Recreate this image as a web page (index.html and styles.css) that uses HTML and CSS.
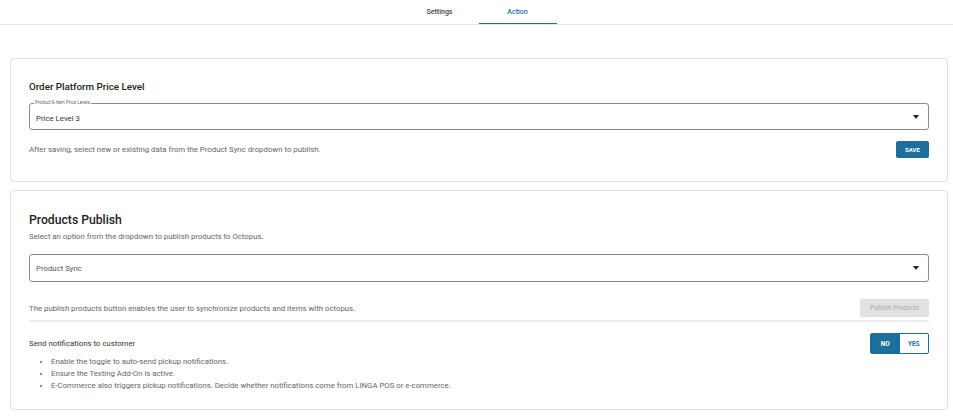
FILE: index.html
```html
<!DOCTYPE html>
<html lang="en">
<head>
    <meta charset="UTF-8">
    <title>Octopus Integration - Action</title>
    <link rel="stylesheet" href="styles.css">
</head>
<body>
    <div class="tabs">
        <div class="tab">Settings</div>
        <div class="tab active">Action</div>
    </div>

    <div class="content">
        <div class="card card-price">
            <h2 class="card-title">Order Platform Price Level</h2>
            <fieldset class="field">
                <legend>Product &amp; Item Price Levels</legend>
                <span class="field-value">Price Level 3</span>
                <span class="caret"></span>
            </fieldset>
            <div class="row">
                <p class="muted">After saving, select new or existing data from the Product Sync dropdown to publish.</p>
                <button class="btn-save">SAVE</button>
            </div>
        </div>

        <div class="card card-publish">
            <h2 class="card-title big">Products Publish</h2>
            <p class="muted sub">Select an option from the dropdown to publish products to Octopus.</p>
            <div class="field select">
                <span class="field-value light">Product Sync</span>
                <span class="caret"></span>
            </div>
            <div class="row publish-row">
                <p class="muted">The publish products button enables the user to synchronize products and items with octopus.</p>
                <button class="btn-disabled" disabled>Publish Products</button>
            </div>
            <div class="row notify-row">
                <p class="notify-label">Send notifications to customer</p>
                <div class="toggle">
                    <span class="opt on">NO</span>
                    <span class="opt">YES</span>
                </div>
            </div>
            <ul class="notes">
                <li>Enable the toggle to auto-send pickup notifications.</li>
                <li>Ensure the Texting Add-On is active.</li>
                <li>E-Commerce also triggers pickup notifications. Decide whether notifications come from LINGA POS or e-commerce.</li>
            </ul>
        </div>
    </div>
</body>
</html>
```

FILE: styles.css
```css
* { margin: 0; padding: 0; box-sizing: border-box; }
body {
    font-family: Roboto, "Liberation Sans", sans-serif;
    background: #fff;
    color: #333;
}
.tabs {
    display: flex;
    justify-content: center;
    height: 25px;
    border-bottom: 1px solid #e3e3e3;
    padding-left: 4px;
}
.tab {
    width: 78px;
    text-align: center;
    font-size: 7px;
    font-weight: 500;
    color: #444;
    line-height: 24px;
}
.tab.active {
    color: #1b6f9a;
    border-bottom: 1.5px solid #1b6f9a;
}
.content {
    padding: 33px 5px 0 10px;
}
.card {
    border: 1px solid #e0e0e0;
    border-radius: 4px;
    padding: 0 18px;
}
.card-price {
    height: 124px;
    padding-top: 21px;
}
.card-publish {
    margin-top: 8px;
    height: 220px;
    padding-top: 21px;
}
.card-title {
    font-size: 9.8px;
    font-weight: 500;
    color: #222;
    line-height: 14px;
}
.card-title.big {
    font-size: 12.2px;
    line-height: 17px;
}
.field {
    position: relative;
    border: 1px solid #8a8a8a;
    border-radius: 3px;
    height: 28px;
    display: flex;
    align-items: center;
    padding: 0 6px;
}
fieldset.field {
    margin-top: 7px;
    height: 29px;
    padding-top: 0;
}
.field legend {
    font-size: 4.5px;
    color: #666;
    padding: 0 1px;
    margin-left: -2px;
    line-height: 4px;
}
.field-value {
    font-size: 7.8px;
    color: #333;
}
fieldset .field-value {
    position: relative;
    top: 1px;
}
.field-value.light {
    color: #555;
}
.caret {
    margin-left: auto;
    margin-right: 3px;
    width: 0;
    height: 0;
    border-left: 3.5px solid transparent;
    border-right: 3.5px solid transparent;
    border-top: 4px solid #222;
}
.row {
    display: flex;
    justify-content: space-between;
    align-items: center;
}
.card-price .row {
    margin-top: 11px;
}
.muted {
    font-size: 7.8px;
    color: #666;
}
.sub {
    margin-top: 3px;
}
.btn-save {
    width: 33px;
    height: 17px;
    background: #1b6f9a;
    color: #fff;
    border: none;
    border-radius: 2px;
    font-family: inherit;
    font-size: 6px;
    font-weight: 700;
}
.select {
    margin-top: 13px;
}
.publish-row {
    margin-top: 17px;
    padding-bottom: 3px;
    border-bottom: 2px solid #ececec;
}
.btn-disabled {
    width: 69px;
    height: 18px;
    background: #e2e2e2;
    color: #aaa;
    border: none;
    border-radius: 2px;
    font-family: inherit;
    font-size: 6.5px;
}
.notify-row {
    margin-top: 11px;
}
.notify-label {
    font-size: 7.8px;
    color: #333;
}
.toggle {
    display: flex;
    border: 1px solid #1b6f9a;
    border-radius: 2px;
    height: 21px;
    width: 59px;
}
.opt {
    flex: 1;
    display: flex;
    align-items: center;
    justify-content: center;
    font-size: 6.5px;
    font-weight: 700;
    color: #1b6f9a;
}
.opt.on {
    background: #1b6f9a;
    color: #fff;
}
.notes {
    margin-top: 2px;
    padding-left: 22px;
    font-size: 7.8px;
    color: #666;
    line-height: 12px;
}
```
